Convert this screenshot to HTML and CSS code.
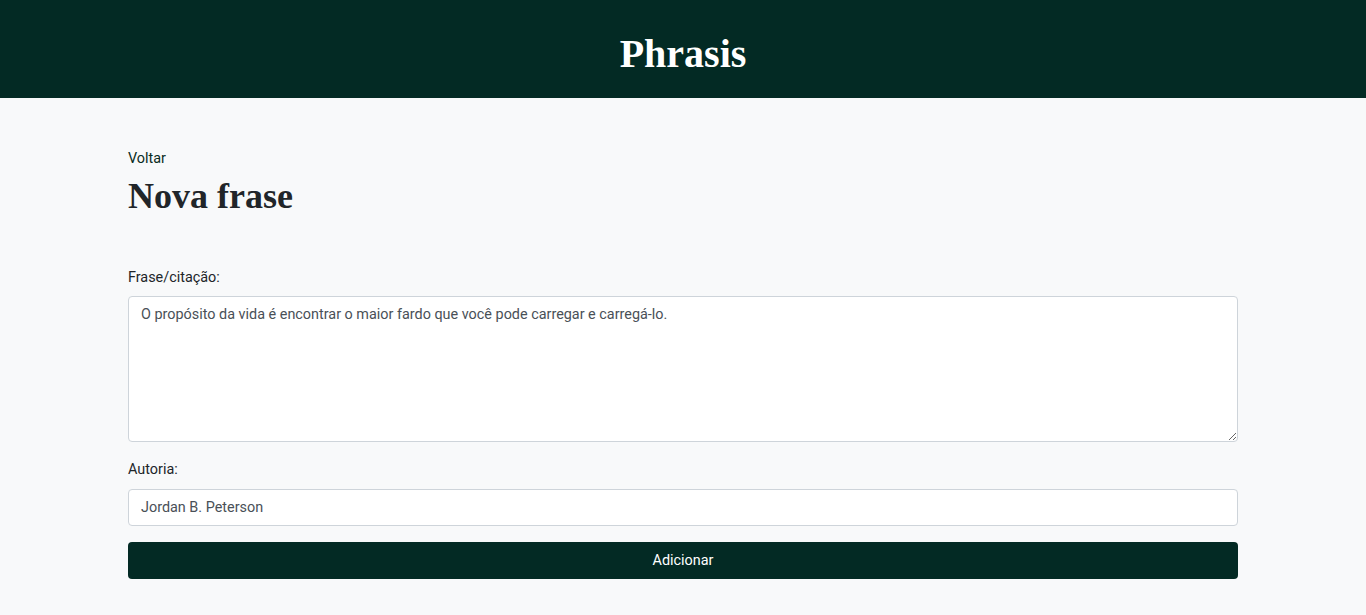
FILE: index.html
```html
<!DOCTYPE html>
<html lang="pt-BR">
<head>
<meta charset="utf-8">
<title>Phrasis</title>
<link rel="stylesheet" href="styles.css">
</head>
<body>
<header class="topbar">
  <h1 class="brand">Phrasis</h1>
</header>
<main class="container">
  <a class="back" href="#">Voltar</a>
  <h2 class="page-title">Nova frase</h2>
  <form class="form">
    <label class="label" for="frase">Frase/citação:</label>
    <textarea id="frase" class="control area">O propósito da vida é encontrar o maior fardo que você pode carregar e carregá-lo.</textarea>
    <label class="label" for="autoria">Autoria:</label>
    <input id="autoria" class="control input" type="text" value="Jordan B. Peterson">
    <button class="btn" type="button">Adicionar</button>
  </form>
</main>
</body>
</html>
```
FILE: styles.css
```css
* { box-sizing: border-box; }
html, body { margin: 0; padding: 0; }
body {
  background: #f8f9fa;
  font-family: Roboto, "Liberation Sans", sans-serif;
  font-size: 14.4px;
  line-height: 1.5;
  color: #212529;
}
.topbar {
  background: #032a24;
  height: 98px;
  display: flex;
  align-items: center;
  justify-content: center;
}
.brand {
  margin: 0;
  font-family: "Liberation Serif", "Times New Roman", serif;
  font-weight: bold;
  font-size: 40px;
  line-height: 48px;
  color: #fff;
  padding-top: 10px;
}
.container {
  width: 1110px;
  margin: 0 auto;
  padding-top: 50px;
}
.back {
  display: block;
  color: #0a2c22;
  text-decoration: none;
}
.page-title {
  margin: 5px 0 0;
  font-family: "Liberation Serif", "Times New Roman", serif;
  font-weight: bold;
  font-size: 36px;
  line-height: 43px;
  color: #212529;
}
.form {
  display: flex;
  flex-direction: column;
  padding-top: 49px;
}
.label {
  display: block;
  margin-bottom: 8px;
}
.control {
  display: block;
  width: 100%;
  font-family: Roboto, "Liberation Sans", sans-serif;
  font-size: 14.4px;
  line-height: 1.5;
  color: #495057;
  background: #fff;
  border: 1px solid #ced4da;
  border-radius: 4px;
  padding: 6px 12px;
  margin: 0;
}
.area {
  height: 146px;
  padding-top: 7px;
  resize: vertical;
  margin-bottom: 17px;
}
.input {
  height: 37px;
  margin-bottom: 16px;
}
.btn {
  display: block;
  width: 100%;
  height: 37px;
  background: #032a24;
  color: #fff;
  border: none;
  border-radius: 4px;
  font-family: Roboto, "Liberation Sans", sans-serif;
  font-size: 14.4px;
  cursor: pointer;
}
```
